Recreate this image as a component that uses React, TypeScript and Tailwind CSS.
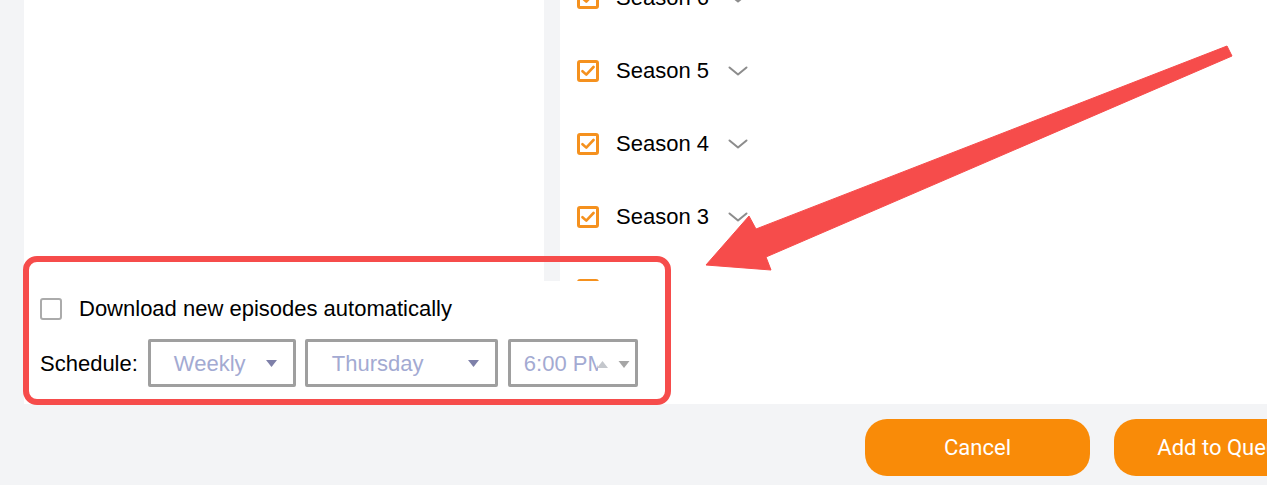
import React from 'react';

const seasons = ['Season 6', 'Season 5', 'Season 4', 'Season 3', 'Season 2'];

const OrangeCheck: React.FC = () => (
    <div className="flex h-[22px] w-[22px] shrink-0 items-center justify-center rounded-[3px] border-[3px] border-[#f5911e] bg-white">
        <svg width="14" height="12" viewBox="0 0 14 12" fill="none">
            <path d="M1.5 6.2 L5.3 9.6 L12.5 2" stroke="#f5911e" strokeWidth="2.6" strokeLinecap="round" strokeLinejoin="round" />
        </svg>
    </div>
);

const Chevron: React.FC = () => (
    <svg width="20" height="10" viewBox="0 0 20 10" fill="none">
        <path d="M1.5 1.5 L10 8.5 L18.5 1.5" stroke="#8c8c8c" strokeWidth="2" strokeLinecap="round" strokeLinejoin="round" />
    </svg>
);

const Caret: React.FC<{ up?: boolean; color: string; w?: number }> = ({ up, color, w = 11 }) => (
    <svg width={w} height="7" viewBox="0 0 11 7">
        <path d={up ? 'M0 7 L5.5 0 L11 7 Z' : 'M0 0 L11 0 L5.5 7 Z'} fill={color} />
    </svg>
);

const SelectBox: React.FC<{ label: string; width: string; textPad: string }> = ({ label, width, textPad }) => (
    <div className={`flex h-[48px] items-center justify-between rounded-[2px] border-[3px] border-[#9f9f9f] bg-white pr-[16px] ${width} ${textPad}`}>
        <span className="text-[#a3aad2]">{label}</span>
        <Caret color="#7e80a9" />
    </div>
);

export default function App() {
    return (
        <div
            className="relative h-[485px] w-full overflow-hidden bg-[#f3f4f6] text-[22px] text-black"
            style={{ fontFamily: '"Liberation Sans", Arial, sans-serif' }}
        >
            <div className="ml-6 w-[1320px] bg-white">
                <div className="flex h-[281px]">
                    <div className="w-[520px] bg-white" />
                    <div className="w-4 bg-[#f3f4f6]" />
                    <div className="flex-1 overflow-hidden">
                        <div className="-mt-[39px]">
                            {seasons.map((s) => (
                                <div key={s} className="flex h-[73px] items-center pl-[17px]">
                                    <OrangeCheck />
                                    <span className="ml-[17px] leading-none">{s}</span>
                                    <span className="ml-[19px] flex items-center">
                                        <Chevron />
                                    </span>
                                </div>
                            ))}
                        </div>
                    </div>
                </div>

                <div className="h-[123px] px-4 pt-[17px]">
                    <div className="flex items-center">
                        <div className="h-[22px] w-[22px] rounded-[3px] border-2 border-[#ababab] bg-white" />
                        <span className="ml-[17px] leading-none">Download new episodes automatically</span>
                    </div>
                    <div className="mt-[19px] flex items-center">
                        <span className="mr-[10px]">Schedule:</span>
                        <SelectBox label="Weekly" width="w-[148px]" textPad="pl-[23px]" />
                        <div className="ml-[9px]">
                            <SelectBox label="Thursday" width="w-[193px]" textPad="pl-[24px]" />
                        </div>
                        <div className="ml-[10px] flex h-[48px] w-[130px] items-center rounded-[2px] border-[3px] border-[#9f9f9f] bg-white pl-[13px]">
                            <div className="w-[74px] overflow-hidden whitespace-nowrap text-[#a3aad2]">6:00 PM</div>
                            <div className="ml-[-2px] flex items-center gap-[9px] pt-[3px]">
                                <Caret up color="#c4c7cc" w={13} />
                                <Caret color="#a6a6a6" w={12} />
                            </div>
                        </div>
                    </div>
                </div>
            </div>

            <div className="mt-[15px] flex gap-6 pl-[865px]" style={{ fontFamily: 'Roboto, "Liberation Sans", sans-serif' }}>
                <button className="h-[57px] w-[225px] shrink-0 rounded-[22px] bg-[#f98b08] text-[22px] text-white">Cancel</button>
                <button className="h-[57px] w-[225px] shrink-0 rounded-[22px] bg-[#f98b08] pr-[6px] text-[22px] text-white">Add to Queue</button>
            </div>

            {/* annotation overlay */}
            <div className="pointer-events-none absolute left-[23px] top-[256px] h-[149px] w-[648px] rounded-[14px] border-[6px] border-[#f64c4b]" />
            <svg className="pointer-events-none absolute left-0 top-0" width="1267" height="485" viewBox="0 0 1267 485">
                <polygon
                    points="706,265 749,216 756,229 1227,46 1232,56 766,257 771,270"
                    fill="#f64c4b"
                    stroke="#f64c4b"
                    strokeWidth="1"
                    strokeLinejoin="round"
                />
            </svg>
        </div>
    );
}
